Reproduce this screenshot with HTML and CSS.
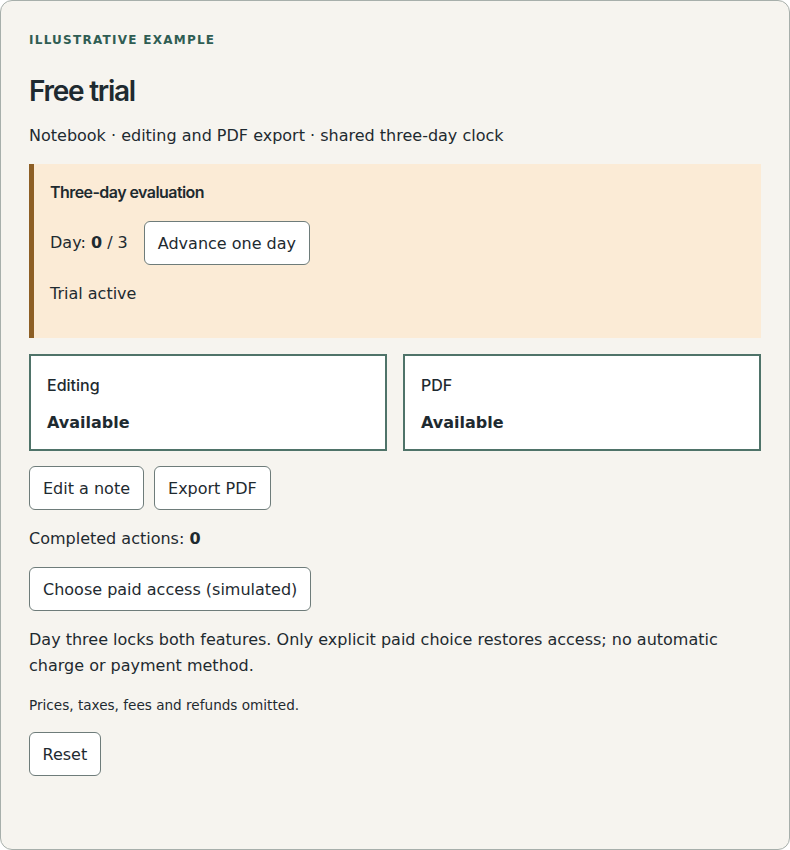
FILE: index.html
```html
<!DOCTYPE html>
<html lang="en">
<head>
    <meta charset="UTF-8">
    <meta name="viewport" content="width=device-width, initial-scale=1.0">
    <title>Free trial</title>
    <link rel="stylesheet" href="styles.css">
</head>
<body>
    <div class="card">
        <p class="eyebrow">Illustrative example</p>
        <h1>Free trial</h1>
        <p class="sub">Notebook · editing and PDF export · shared three-day clock</p>

        <div class="trial">
            <h2>Three-day evaluation</h2>
            <div class="day-row">
                <span>Day: <b>0</b> / 3</span>
                <button class="btn">Advance one day</button>
            </div>
            <p class="status">Trial active</p>
        </div>

        <div class="features">
            <div class="feature">
                <p class="name">Editing</p>
                <p class="state">Available</p>
            </div>
            <div class="feature">
                <p class="name">PDF</p>
                <p class="state">Available</p>
            </div>
        </div>

        <div class="actions">
            <button class="btn">Edit a note</button>
            <button class="btn">Export PDF</button>
        </div>

        <p class="count">Completed actions: <b>0</b></p>

        <button class="btn">Choose paid access (simulated)</button>

        <p class="note">Day three locks both features. Only explicit paid choice restores access; no automatic charge or payment method.</p>
        <p class="small">Prices, taxes, fees and refunds omitted.</p>

        <button class="btn">Reset</button>
    </div>
</body>
</html>
```

FILE: styles.css
```css
body { margin: 0; font-family: "DejaVu Sans", sans-serif; font-size: 16px; line-height: 26px; color: #1e2a30; background: #fff; }
p { margin: 0; }
.card { box-sizing: border-box; min-height: 850px; background: #f6f4ef; border: 1px solid #a7afab; border-radius: 12px; padding: 29px 28px 40px; }
.eyebrow { font-size: 12px; font-weight: bold; letter-spacing: 0.105em; text-transform: uppercase; color: #2f5d53; line-height: 20px; }
h1 { font-family: Inter, sans-serif; font-size: 28px; font-weight: 600; letter-spacing: -0.045em; line-height: 34px; margin: 24px 0 15px; }
.sub { margin-bottom: 15px; }
.trial { background: #fbebd6; border-left: 5px solid #8d5f25; padding: 16px 16px 31px; }
h2 { font-family: Inter, sans-serif; font-size: 16px; font-weight: 600; letter-spacing: -0.035em; margin: 0; line-height: 24px; }
.day-row { display: flex; align-items: center; gap: 16px; margin-top: 17px; }
.status { margin-top: 16px; }
.btn { font-family: "DejaVu Sans", sans-serif; font-size: 16px; color: #1e2a30; background: #fff; border: 1px solid #6e7c7a; border-radius: 6px; height: 44px; padding: 0 13px; cursor: pointer; }
.features { display: grid; grid-template-columns: 1fr 1fr; gap: 16px; margin: 16px 0 15px; }
.feature { background: #fff; border: 2px solid #4f7369; padding: 16px 16px 13px; }
.name { font-family: Inter, sans-serif; font-weight: 500; margin-bottom: 12px; }
.state { font-weight: bold; }
.actions { display: flex; gap: 10px; }
.count { margin: 16px 0 15px; }
.note { margin: 16px 0 13px; }
.small { font-size: 13.6px; margin-bottom: 14px; }
.small + .btn { padding: 0 12.5px; }
```
